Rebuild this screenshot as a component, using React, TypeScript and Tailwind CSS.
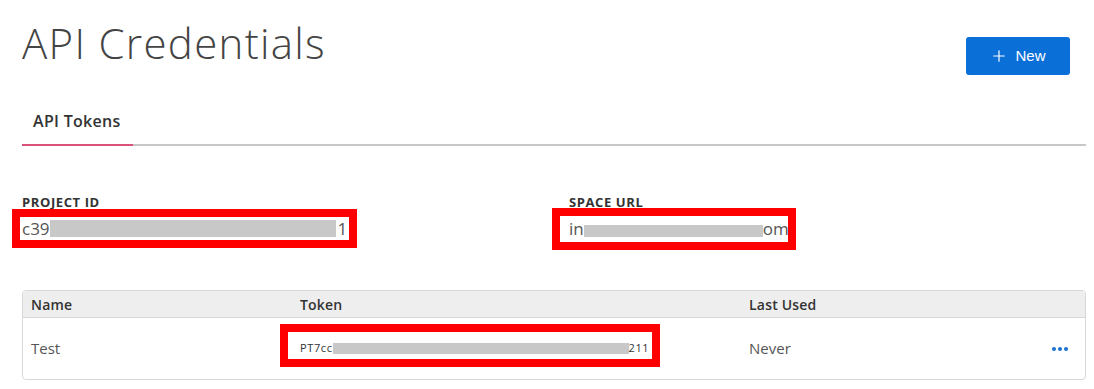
import { Plus } from "lucide-react";

const font = { fontFamily: '"Open Sans", "Noto Sans", sans-serif' };

function Redacted({ className }: { className: string }) {
    return <span className={`inline-block bg-[#c8c8c8] ${className}`} />;
}

export default function App() {
    return (
        <div className="min-h-[389px] bg-white pl-[22px] pr-[8px] text-[#333]" style={font}>
            {/* header */}
            <div className="flex items-start justify-between pt-[19px]">
                <h1 className="text-[42px] font-light leading-[48px] tracking-[1.3px] text-[#444]">API Credentials</h1>
                <button className="mr-[16px] mt-[18px] flex h-[38px] w-[104px] items-center justify-center gap-[7px] rounded-[3px] bg-[#0b6fd8] text-[15px] text-white" style={{ fontFamily: '"Liberation Sans", Arial, sans-serif' }}>
                    <Plus size={18} strokeWidth={1.6} />
                    New
                </button>
            </div>

            {/* tabs */}
            <div className="mt-[35px] flex border-b-2 border-[#c8c8c8]">
                <div className="-mb-[2px] w-[111px] border-b-2 border-[#d9527a] px-[11px] pb-[12px] text-[16px] font-semibold leading-[22px] tracking-[0.3px] text-[#333]">
                    API Tokens
                </div>
            </div>

            {/* fields */}
            <div className="mt-[48px] flex">
                <div className="w-[547px]">
                    <div className="text-[13px] font-bold leading-[16px] tracking-[0.6px] text-[#333]">PROJECT ID</div>
                    <div className="relative mt-[7px] flex h-[23px] items-center text-[17px] leading-[23px] text-[#555]">
                        <span>c39</span>
                        <Redacted className="h-[17px] w-[286px]" />
                        <span className="ml-[2px]">1</span>
                        <span className="absolute -left-[10px] -top-[8px] h-[39px] w-[345px] border-[8px] border-[#f00]" />
                    </div>
                </div>
                <div>
                    <div className="text-[13px] font-bold leading-[16px] tracking-[0.6px] text-[#333]">SPACE URL</div>
                    <div className="relative mt-[7px] flex h-[23px] items-center text-[17px] leading-[23px] text-[#555]">
                        <span>in</span>
                        <Redacted className="mt-[4px] h-[12px] w-[179px]" />
                        <span>om</span>
                        <span className="absolute -left-[17px] -top-[9px] h-[42px] w-[244px] border-[8px] border-[#f00]" />
                    </div>
                </div>
            </div>

            {/* table */}
            <div className="mt-[50px] overflow-hidden rounded-[4px] border border-[#d8d8d8]">
                <div className="grid h-[27px] grid-cols-[269px_449px_1fr] items-center border-b border-[#d8d8d8] bg-[#eeeeee] pl-[8px] text-[14px] font-semibold tracking-[0.2px] text-[#333]">
                    <div>Name</div>
                    <div>Token</div>
                    <div>Last Used</div>
                </div>
                <div className="grid h-[61px] grid-cols-[269px_449px_1fr] items-center pl-[8px] text-[15px] text-[#555]">
                    <div>Test</div>
                    <div className="relative flex items-center text-[11px] tracking-[0.6px] text-[#333]">
                        <span>PT7cc</span>
                        <Redacted className="h-[11px] w-[296px]" />
                        <span>211</span>
                        <span className="absolute -left-[20px] -top-[16px] h-[43px] w-[380px] border-[8px] border-[#f00]" />
                    </div>
                    <div className="flex items-center justify-between pr-[17px]">
                        <span>Never</span>
                        <span className="flex gap-[2px]">
                            <span className="h-[4px] w-[4px] rounded-full bg-[#1b6fd0]" />
                            <span className="h-[4px] w-[4px] rounded-full bg-[#1b6fd0]" />
                            <span className="h-[4px] w-[4px] rounded-full bg-[#1b6fd0]" />
                        </span>
                    </div>
                </div>
            </div>
        </div>
    );
}
